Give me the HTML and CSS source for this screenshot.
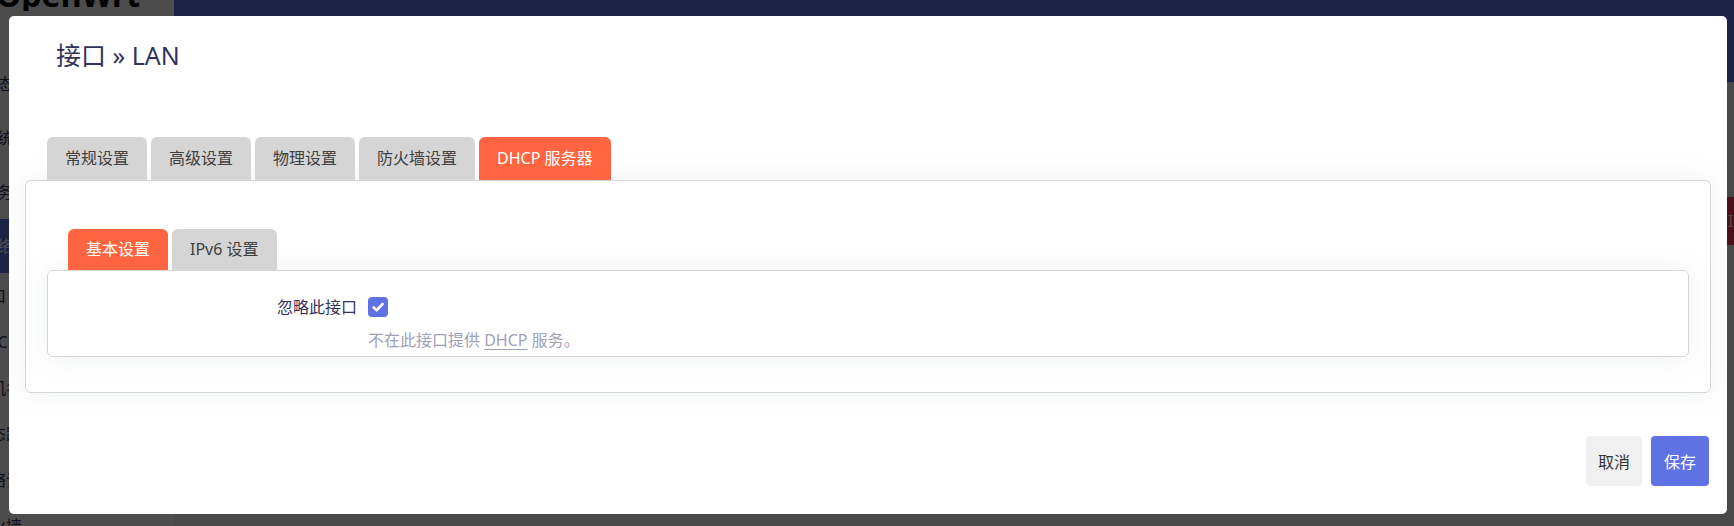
FILE: index.html
```html
<!DOCTYPE html>
<html lang="zh-CN">
<head>
<meta charset="utf-8">
<title>接口 » LAN</title>
<link rel="stylesheet" href="styles.css">
</head>
<body>
<div class="page">
  <aside class="sidebar">
    <div class="logo">OpenWrt</div>
    <nav class="menu">
      <div class="menu-item">状态</div>
      <div class="menu-item">系统</div>
      <div class="menu-item">服务</div>
      <div class="menu-item active">网络</div>
      <div class="sub-item">接口</div>
      <div class="sub-item">DHCP/DNS</div>
      <div class="sub-item">主机名</div>
      <div class="sub-item">静态路由</div>
      <div class="sub-item">网络诊断</div>
      <div class="sub-item">防火墙</div>
    </nav>
  </aside>
  <main class="main">
    <header class="topbar"></header>
    <div class="alert">IPv6</div>
  </main>
</div>

<div class="overlay">
  <div class="modal">
    <h4 class="modal-title">接口 » LAN</h4>
    <ul class="tabs">
      <li class="tab">常规设置</li>
      <li class="tab">高级设置</li>
      <li class="tab">物理设置</li>
      <li class="tab">防火墙设置</li>
      <li class="tab active">DHCP 服务器</li>
    </ul>
    <div class="panel">
      <ul class="tabs sub">
        <li class="tab active">基本设置</li>
        <li class="tab">IPv6 设置</li>
      </ul>
      <div class="section">
        <div class="field">
          <label class="field-title">忽略此接口</label>
          <div class="field-value">
            <span class="checkbox">
              <svg width="20" height="20" viewBox="0 0 20 20"><path d="M5.6 10.4 L8.6 13.3 L14.5 7.1" fill="none" stroke="#fff" stroke-width="2.7" stroke-linecap="round" stroke-linejoin="round"/></svg>
            </span>
          </div>
          <div class="field-desc">不在此接口提供 <abbr>DHCP</abbr> 服务。</div>
        </div>
      </div>
    </div>
    <div class="actions">
      <button class="btn">取消</button>
      <button class="btn primary">保存</button>
    </div>
  </div>
</div>
</body>
</html>
```

FILE: styles.css
```css
html, body {
  margin: 0;
  padding: 0;
}

body {
  font-family: "Noto Sans", "Noto Sans CJK SC", sans-serif;
  overflow: hidden;
}

/* underlying page */
.page {
  display: flex;
  height: 526px;
  overflow: hidden;
  background: #f4f5f7;
}

.sidebar {
  width: 174px;
  flex: none;
  background: #ffffff;
  overflow: hidden;
}

.logo {
  font-family: "Noto Sans", sans-serif;
  font-weight: 700;
  font-size: 32px;
  line-height: 32px;
  height: 11px;
  margin: 0 0 0 -4px;
  color: #000000;
  white-space: nowrap;
  overflow: hidden;
  display: flex;
  align-items: flex-end;
}

.menu {
  margin-top: 46px;
}

.menu-item {
  height: 54px;
  line-height: 54px;
  font-size: 16px;
  color: #32325d;
  text-indent: -19px;
  white-space: nowrap;
}

.menu-item.active {
  background: #5e72e4;
  color: #ffffff;
}

.sub-item {
  height: 46px;
  line-height: 46px;
  font-size: 16px;
  color: #32325d;
  text-indent: -26px;
  white-space: nowrap;
}

.main {
  flex: 1;
  min-width: 0;
}

.topbar {
  height: 82px;
  background: #5e72e4;
}

.alert {
  margin-top: 115px;
  height: 48px;
  line-height: 48px;
  background: #f5365c;
  color: #ffffff;
  font-size: 16px;
  padding-left: 1554px;
  white-space: nowrap;
  overflow: hidden;
}

/* modal */
.overlay {
  position: fixed;
  inset: 0;
  background: rgba(0, 0, 0, 0.7);
  padding: 16px 7px 0 9px;
}

.modal {
  background: #ffffff;
  border-radius: 5px;
  padding: 25px 16px 28px;
}

.modal-title {
  margin: 0 0 67px;
  padding-left: 31px;
  font-size: 25px;
  line-height: 29px;
  font-weight: 400;
  color: #32325d;
}

.tabs {
  display: flex;
  gap: 4px;
  list-style: none;
  margin: 0;
  padding: 0 0 0 22px;
}

.tab {
  height: 43px;
  line-height: 43px;
  padding: 0 18px;
  border-radius: 6px 6px 0 0;
  background: #d5d5d5;
  color: #404040;
  font-size: 16px;
  white-space: nowrap;
}

.tab.active {
  background: #ff6541;
  color: #ffffff;
}

.tabs.sub {
  padding-left: 21px;
}

.tabs.sub .tab {
  height: 41px;
  line-height: 41px;
}

.panel {
  border: 1px solid #d6d6d6;
  border-radius: 6px;
  padding: 48px 21px 35px;
  box-shadow: 0 0 24px rgba(136, 152, 170, 0.15);
}

.section {
  border: 1px solid #d6d6d6;
  border-radius: 6px;
  padding: 21px 0 5px;
  box-shadow: 0 0 24px rgba(136, 152, 170, 0.15);
}

.field {
  display: grid;
  grid-template-columns: 309px 1fr;
  column-gap: 11px;
  align-items: center;
}

.field-title {
  text-align: right;
  color: #32325d;
  font-size: 16px;
  line-height: 30px;
}

.field-value {
  display: flex;
  align-items: center;
  height: 30px;
}

.checkbox {
  width: 20px;
  height: 20px;
  border-radius: 4px;
  background: #5e72e4;
  display: flex;
}

.field-desc {
  grid-column: 2;
  margin-top: 7px;
  font-size: 16px;
  line-height: 22px;
  color: #a0a0b6;
}

.field-desc abbr {
  text-decoration: underline;
  text-underline-offset: 3px;
}

.actions {
  display: flex;
  justify-content: flex-end;
  gap: 9px;
  margin-top: 43px;
  padding-right: 2px;
}

.btn {
  height: 50px;
  padding: 0 12px;
  border: none;
  border-radius: 4px;
  font-family: "Noto Sans", "Noto Sans CJK SC", sans-serif;
  font-size: 16px;
  background: #f0f0f0;
  color: #333333;
}

.btn.primary {
  padding: 0 13px;
  background: #5e72e4;
  color: #ffffff;
}
```
